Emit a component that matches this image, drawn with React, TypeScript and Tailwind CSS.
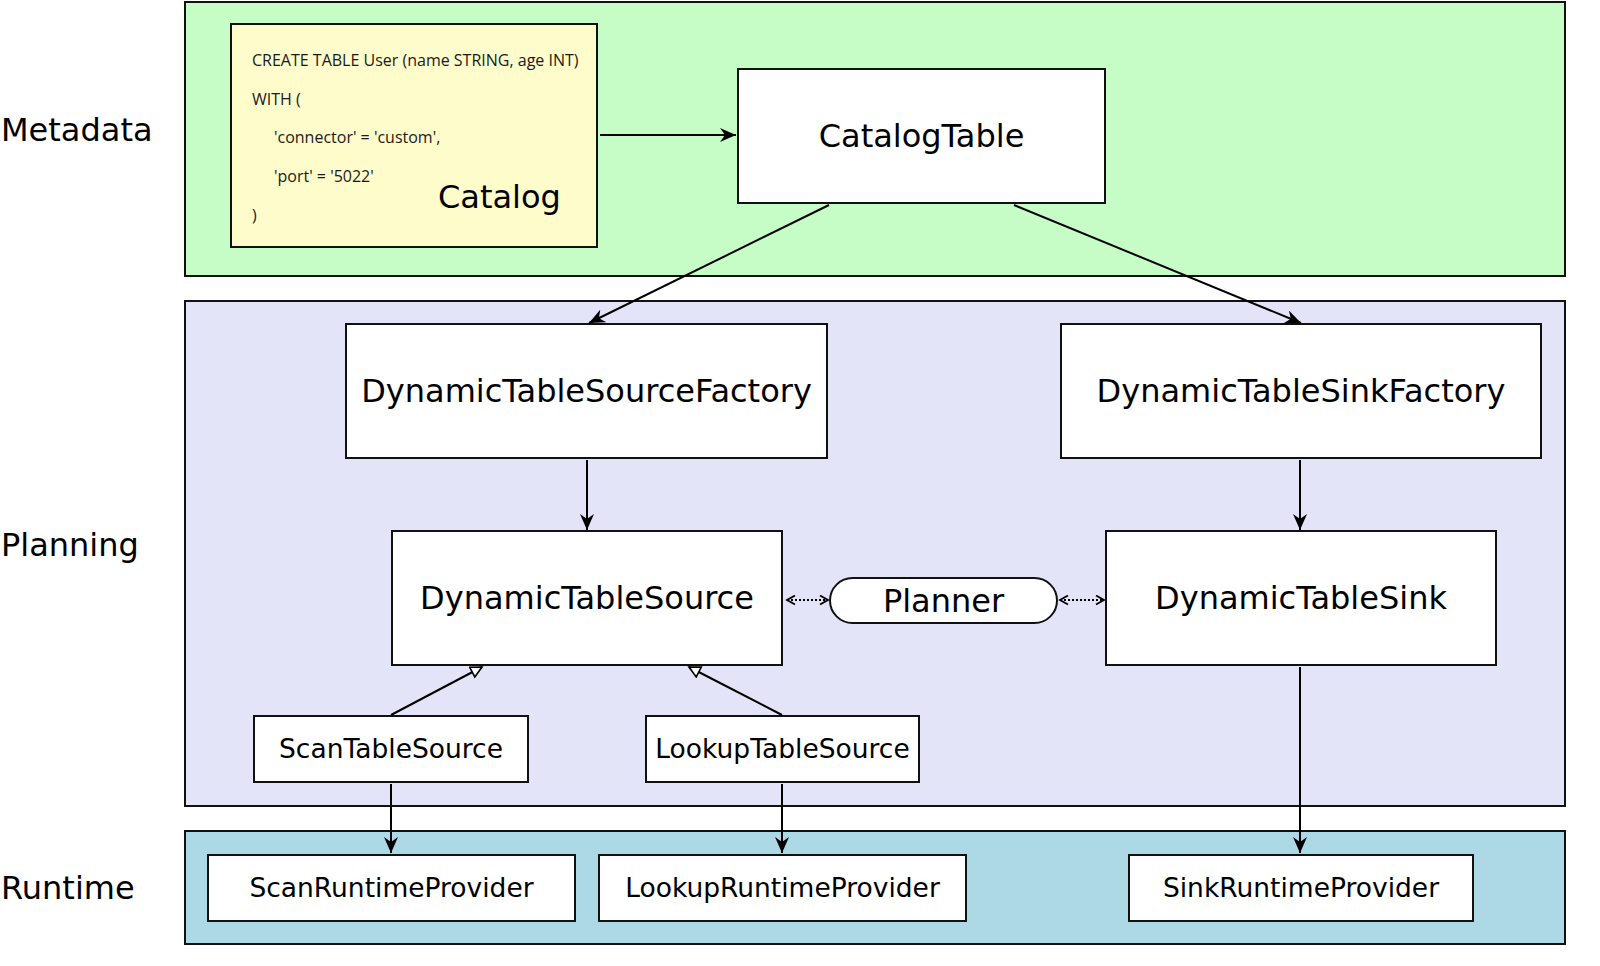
const dejavu = "font-['DejaVu_Sans',sans-serif]"

type BoxProps = {
  label: string
  className: string
  size?: string
}

function Box({ label, className, size = 'text-[32px]' }: BoxProps) {
  return (
    <div
      className={`flex shrink-0 items-center justify-center border-2 border-[#111] bg-white text-black ${size} ${className}`}
    >
      {label}
    </div>
  )
}

function Arrows() {
  return (
    <svg className="pointer-events-none absolute inset-0 h-full w-full" viewBox="0 0 1600 966">
      <defs>
        <marker id="head" markerWidth="17" markerHeight="14" refX="16" refY="7" orient="auto" markerUnits="userSpaceOnUse">
          <path d="M0,0 L16,7 L0,14 L5,7 Z" fill="#000" />
        </marker>
        <marker id="tri" markerWidth="14" markerHeight="14" refX="12" refY="6.5" orient="auto" markerUnits="userSpaceOnUse">
          <path d="M1,1 L12,6.5 L1,12 Z" fill="#fff" stroke="#000" strokeWidth="1.6" />
        </marker>
        <marker id="chev" markerWidth="11" markerHeight="11" refX="9" refY="5.5" orient="auto-start-reverse" markerUnits="userSpaceOnUse">
          <path d="M1,1 L9,5.5 L1,10" fill="none" stroke="#000" strokeWidth="1.8" />
        </marker>
      </defs>
      <g stroke="#000" strokeWidth="2" fill="none">
        <line x1="600" y1="135" x2="736" y2="135" markerEnd="url(#head)" />
        <line x1="829" y1="205" x2="589" y2="323" markerEnd="url(#head)" />
        <line x1="1014" y1="205" x2="1301" y2="323" markerEnd="url(#head)" />
        <line x1="587" y1="460" x2="587" y2="530" markerEnd="url(#head)" />
        <line x1="1300" y1="460" x2="1300" y2="530" markerEnd="url(#head)" />
        <line x1="391" y1="715" x2="482" y2="667" markerEnd="url(#tri)" />
        <line x1="782" y1="715" x2="689" y2="667" markerEnd="url(#tri)" />
        <line x1="391" y1="784" x2="391" y2="853" markerEnd="url(#head)" />
        <line x1="782" y1="784" x2="782" y2="853" markerEnd="url(#head)" />
        <line x1="1300" y1="667" x2="1300" y2="853" markerEnd="url(#head)" />
        <line x1="787" y1="600" x2="828" y2="600" strokeDasharray="2 2" markerStart="url(#chev)" markerEnd="url(#chev)" />
        <line x1="1060" y1="600" x2="1104" y2="600" strokeDasharray="2 2" markerStart="url(#chev)" markerEnd="url(#chev)" />
      </g>
    </svg>
  )
}

export default function App() {
  return (
    <div className={`relative h-[966px] w-[1600px] overflow-hidden bg-white pt-px ${dejavu}`}>
      <div className="flex flex-col gap-[23px]">
        {/* metadata */}
        <div className="flex items-center">
          <div className="w-[184px] shrink-0 pb-[18px] pl-[1px] text-[32px] text-black">Metadata</div>
          <div className="flex h-[276px] w-[1382px] items-start border-2 border-[#111] bg-[#c6fcc6] pl-[44px] pt-[20px]">
            <div className="relative h-[225px] w-[368px] shrink-0 border-2 border-[#111] bg-[#fffccc] pl-[20px] pt-[16px] font-['Open_Sans',sans-serif] text-[16px] leading-[38.7px] text-[#1a1a1a]">
              <div>CREATE TABLE User (name STRING, age INT)</div>
              <div>WITH (</div>
              <div className="pl-[22px]">'connector' = 'custom',</div>
              <div className="pl-[22px]">'port' = '5022'</div>
              <div>)</div>
              <div className={`absolute left-[206px] top-[152px] text-[32px] leading-[40px] text-black ${dejavu}`}>Catalog</div>
            </div>
            <Box label="CatalogTable" className="ml-[139px] mt-[45px] h-[136px] w-[369px]" />
          </div>
        </div>

        {/* planning: free diagram canvas */}
        <div className="flex items-center">
          <div className="w-[184px] shrink-0 pb-[18px] pl-[1px] text-[32px] text-black">Planning</div>
          <div className="relative h-[507px] w-[1382px] border-2 border-[#111] bg-[#e4e4f8]">
            <Box label="DynamicTableSourceFactory" className="absolute left-[159px] top-[21px] h-[136px] w-[483px]" />
            <Box label="DynamicTableSinkFactory" className="absolute left-[874px] top-[21px] h-[136px] w-[482px]" />
            <Box label="DynamicTableSource" className="absolute left-[205px] top-[228px] h-[136px] w-[392px]" />
            <Box label="DynamicTableSink" className="absolute left-[919px] top-[228px] h-[136px] w-[392px]" />
            <Box label="Planner" className="absolute left-[643px] top-[275px] h-[47px] w-[229px] rounded-full" />
            <Box label="ScanTableSource" size="text-[26.5px]" className="absolute left-[67px] top-[413px] h-[68px] w-[276px]" />
            <Box label="LookupTableSource" size="text-[26.5px]" className="absolute left-[459px] top-[413px] h-[68px] w-[275px]" />
          </div>
        </div>

        {/* runtime */}
        <div className="flex items-center">
          <div className="w-[184px] shrink-0 pl-[1px] text-[32px] text-black">Runtime</div>
          <div className="flex h-[115px] w-[1382px] items-center gap-[22px] border-2 border-[#111] bg-[#add8e6] pl-[21px]">
            <Box label="ScanRuntimeProvider" size="text-[26.5px]" className="h-[68px] w-[369px]" />
            <Box label="LookupRuntimeProvider" size="text-[26.5px]" className="h-[68px] w-[369px]" />
            <Box label="SinkRuntimeProvider" size="text-[26.5px]" className="ml-[139px] h-[68px] w-[346px]" />
          </div>
        </div>
      </div>
      <Arrows />
    </div>
  )
}
